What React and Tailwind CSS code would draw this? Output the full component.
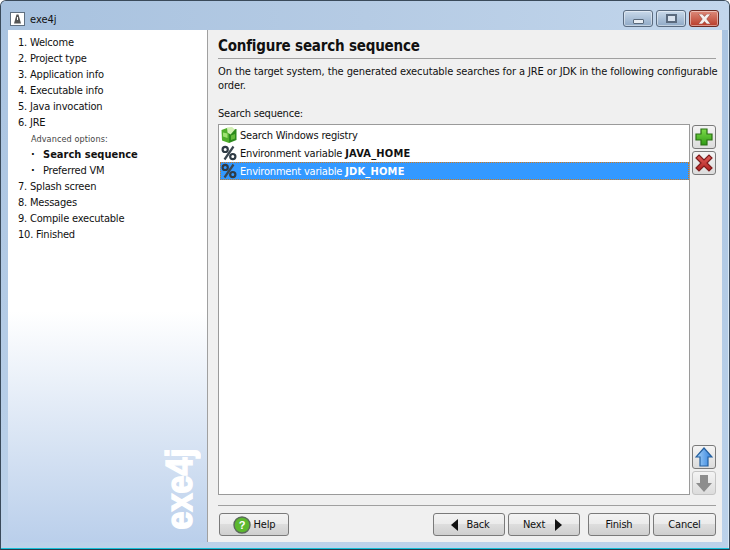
const font = { fontFamily: '"DejaVu Sans Condensed", "DejaVu Sans", sans-serif', fontStretch: 'condensed' };

const steps = ['1. Welcome', '2. Project type', '3. Application info', '4. Executable info', '5. Java invocation', '6. JRE'];

const laterSteps = ['7. Splash screen', '8. Messages', '9. Compile executable', '10. Finished'];

const CaptionButton = ({ children, className }) => (
  <div className={`w-[30px] h-[17px] flex items-center justify-center rounded-[3px] border shadow-[inset_0_0_0_1px_rgba(255,255,255,0.45)] ${className}`}>
    {children}
  </div>
);

const ToolButton = ({ children, disabled }) => (
  <div className={`w-6 h-6 flex items-center justify-center rounded-[3px] border bg-gradient-to-b from-[#f4f4f4] to-[#dcdcdc] ${disabled ? 'border-[#c4c4c4]' : 'border-[#7a7a7a]'}`}>
    {children}
  </div>
);

const Button = ({ children, className }) => (
  <div className={`h-[23px] flex items-center justify-center rounded-[3px] border border-[#7a7a7a] bg-[linear-gradient(#f3f3f3_0%,#ebebeb_48%,#dddddd_50%,#cfcfcf_100%)] text-[#111] ${className}`}>
    {children}
  </div>
);

const Percent = () => (
  <svg width="16" height="16" viewBox="0 0 16 16" className="shrink-0">
    <circle cx="4.2" cy="4.4" r="2.6" fill="none" stroke="#2f3b45" strokeWidth="2.2" />
    <circle cx="11.8" cy="11.6" r="2.6" fill="none" stroke="#2f3b45" strokeWidth="2.2" />
    <path d="M12.5 1.5 L3.5 14.5" stroke="#3a4650" strokeWidth="2.2" />
  </svg>
);

const Registry = () => (
  <svg width="16" height="16" viewBox="0 0 16 16" className="shrink-0">
    <path d="M0.5 3 L6 1 L8 3 L8 16 L1 13.5 Z" fill="#4fae2b" />
    <path d="M8 3 L15.5 2 L15.5 13 L8 16 Z" fill="#2b8a1c" />
    <path d="M6 0.5 L11 0 L14 2.5 L9.5 7.5 L6.5 5.5 Z" fill="#d2f0b4" />
    <path d="M2 5.5 L6.5 6.5 L6.5 11 L2 9.5 Z" fill="#9fe272" />
    <path d="M10 8.5 L14 7 L14 11.5 L10 13 Z" fill="#64bb3c" />
  </svg>
);

export default function App() {
  return (
    <div style={font} className="w-[730px] h-[550px] overflow-hidden rounded-t-[6px] border border-[#3a4a5a] border-b-[#2a3a4a] bg-gradient-to-b from-[#a9c3e0] to-[#bcd2ea] shadow-[inset_0_-1px_0_#15c0d8,inset_-1px_0_0_#d8e8f6] flex flex-col text-[11px] tracking-[-0.2px]">
      <div className="h-[29px] shrink-0 flex items-start pl-[9px] bg-gradient-to-r from-[#a8c2df] via-[#b5cbe4] to-[#c2d6ec]">
        <div className="w-[15px] h-[14px] mt-[11px] mr-[5px] bg-white border border-[#5f6f80] flex items-center justify-center">
          <svg width="9" height="10" viewBox="0 0 9 10">
            <path d="M3.5 0.5 H5.5 L8 9.5 H1 Z" fill="#555" />
            <path d="M4 3 H5 V6 H4 Z" fill="#fff" />
          </svg>
        </div>
        <span className="mt-[12px] text-[#111] leading-[14px] tracking-normal">exe4j</span>
        <div className="ml-auto mr-[10px] mt-[9px] flex gap-[3px]">
          <CaptionButton className="border-[#5a6b80] bg-gradient-to-b from-[#c9d9ea] to-[#8fa9c6]">
            <div className="w-[11px] h-[5px] mt-[5px] bg-[#e8edf3] border border-[#59697b] rounded-[1px]" />
          </CaptionButton>
          <CaptionButton className="border-[#5a6b80] bg-gradient-to-b from-[#c9d9ea] to-[#8fa9c6]">
            <div className="w-[11px] h-[9px] border-2 border-[#5a6a7e] bg-[#d8e2ee]" />
          </CaptionButton>
          <CaptionButton className="border-[#6b2a22] bg-gradient-to-b from-[#dc8a7a] to-[#b93a28]">
            <svg width="15" height="10" viewBox="0 0 13 9">
              <path d="M1 0 H4.5 L6.5 2.2 L8.5 0 H12 L8.5 4.5 L12 9 H8.5 L6.5 6.8 L4.5 9 H1 L4.5 4.5 Z" fill="#f4f0ee" stroke="#7c2a20" strokeWidth="0.4" />
            </svg>
          </CaptionButton>
        </div>
      </div>

      <div className="flex h-[512px] mx-[7px] shrink-0">
        <aside className="relative w-[200px] shrink-0 border-r border-r-[#a0a0a0] bg-[linear-gradient(#ffffff_0%,#ffffff_55%,#bacfeb_100%)] pl-[10px] pt-[5px] text-[#111]">
          {steps.map((s) => (
            <div key={s} className="h-4 leading-4 whitespace-nowrap">{s}</div>
          ))}
          <div className="h-4 leading-4 pl-[13px] text-[9px] tracking-[0.1px] text-[#444] whitespace-nowrap">Advanced options:</div>
          <div className="h-4 leading-4 pl-[13px] flex whitespace-nowrap">
            <span className="w-[12px] font-bold">·</span>
            <b className="tracking-normal">Search sequence</b>
          </div>
          <div className="h-4 leading-4 pl-[13px] flex whitespace-nowrap">
            <span className="w-[12px] font-bold">·</span>
            Preferred VM
          </div>
          {laterSteps.map((s) => (
            <div key={s} className="h-4 leading-4 whitespace-nowrap">{s}</div>
          ))}
          <div
            className="absolute left-[155px] bottom-[8px] text-white font-bold text-[36px] leading-[34px] tracking-normal [-webkit-text-stroke:1.5px_white] [writing-mode:vertical-rl] rotate-180 scale-y-[0.9]"
            style={{ fontFamily: '"Liberation Sans", sans-serif' }}
          >
            exe4j
          </div>
        </aside>

        <main className="flex-1 min-w-0 bg-[#f0f0f0] flex flex-col pl-[10px] pr-[6px] text-[#111]">
          <h1 className="h-[29px] pt-[6px] text-[15px] leading-[20px] font-bold text-[#111] border-b border-b-[#a0a0a0]">Configure search sequence</h1>
          <p className="mt-[6px] -mr-[3px] leading-[14px] tracking-[-0.1px]">On the target system, the generated executable searches for a JRE or JDK in the following configurable order.</p>
          <div className="mt-[13px] leading-4">Search sequence:</div>
          <div className="mt-[2px] flex gap-[2px] h-[371px]">
            <div className="flex-1 min-w-0 bg-white border border-[#9a9a9a] pt-px pl-px">
              <div className="h-[18px] pl-[1px] flex items-center gap-[3px]"><Registry /><span className="mt-[2px]">Search Windows registry</span></div>
              <div className="h-[18px] pl-[1px] flex items-center gap-[3px]"><Percent /><span className="mt-[2px]">Environment variable <b className="tracking-[0.2px]">JAVA_HOME</b></span></div>
              <div className="h-[18px] flex items-center gap-[3px] bg-[#3399ff] text-white border border-dotted border-[#d07a1a]"><Percent /><span className="mt-[2px]">Environment variable <b className="tracking-[0.2px]">JDK_HOME</b></span></div>
            </div>
            <div className="w-6 shrink-0 pt-px flex flex-col gap-[2px]">
              <ToolButton>
                <svg width="20" height="20" viewBox="0 0 20 20">
                  <defs>
                    <linearGradient id="plus" x1="0" y1="0" x2="0" y2="1">
                      <stop offset="0" stopColor="#7ddc4a" />
                      <stop offset="1" stopColor="#2f9a14" />
                    </linearGradient>
                  </defs>
                  <path d="M7 2 H13 V7 H18 V13 H13 V18 H7 V13 H2 V7 H7 Z" fill="url(#plus)" stroke="#2a6e14" strokeWidth="1.2" />
                </svg>
              </ToolButton>
              <ToolButton>
                <svg width="20" height="20" viewBox="0 0 20 20">
                  <defs>
                    <linearGradient id="cross" x1="0" y1="0" x2="0" y2="1">
                      <stop offset="0" stopColor="#e2605c" />
                      <stop offset="1" stopColor="#b01f1f" />
                    </linearGradient>
                  </defs>
                  <path d="M5 2 L10 7 L15 2 L18 5 L13 10 L18 15 L15 18 L10 13 L5 18 L2 15 L7 10 L2 5 Z" fill="url(#cross)" stroke="#7d1d1d" strokeWidth="1.2" />
                </svg>
              </ToolButton>
              <div className="flex-1" />
              <ToolButton>
                <svg width="18" height="20" viewBox="0 0 18 20">
                  <defs>
                    <linearGradient id="up" x1="0" y1="0" x2="1" y2="0">
                      <stop offset="0" stopColor="#a8d4fa" />
                      <stop offset="1" stopColor="#2f7fdc" />
                    </linearGradient>
                  </defs>
                  <path d="M9 1 L17 10 H13 V19 H5 V10 H1 Z" fill="url(#up)" stroke="#245f9e" strokeWidth="1.2" />
                </svg>
              </ToolButton>
              <ToolButton disabled>
                <svg width="18" height="20" viewBox="0 0 18 20"><path d="M5 2 H13 V10 H17 L9 19 L1 10 H5 Z" fill="#8d8d8d" /></svg>
              </ToolButton>
            </div>
          </div>
          <div className="mt-[10px] border-t border-t-[#a0a0a0]" />
          <div className="mt-[7px] ml-px flex">
            <Button className="w-[70px] gap-[3px]">
              <svg width="18" height="18" viewBox="0 0 18 18">
                <circle cx="9" cy="9" r="8" fill="#5cb82e" stroke="#5a6a5a" strokeWidth="1.4" />
                <text x="9" y="13" textAnchor="middle" fontSize="11" fontWeight="700" fill="#fff" fontFamily="Liberation Sans">?</text>
              </svg>
              <span className="mt-[2px]">Help</span>
            </Button>
            <div className="ml-auto flex">
              <Button className="w-[72px] gap-[8px] pl-[3px] mr-[3px]">
                <svg width="7" height="12" viewBox="0 0 7 12"><path d="M7 0 V12 L0 6 Z" fill="#111" /></svg>
                <span className="mt-[2px]">Back</span>
              </Button>
              <Button className="w-[72px] gap-[10px] pr-[3px] mr-[8px]">
                <span className="mt-[2px]">Next</span>
                <svg width="7" height="12" viewBox="0 0 7 12"><path d="M0 0 V12 L7 6 Z" fill="#111" /></svg>
              </Button>
              <Button className="w-[62px] mr-[3px]"><span className="mt-[2px]">Finish</span></Button>
              <Button className="w-[63px]"><span className="mt-[2px]">Cancel</span></Button>
            </div>
          </div>
        </main>
      </div>
    </div>
  );
}
